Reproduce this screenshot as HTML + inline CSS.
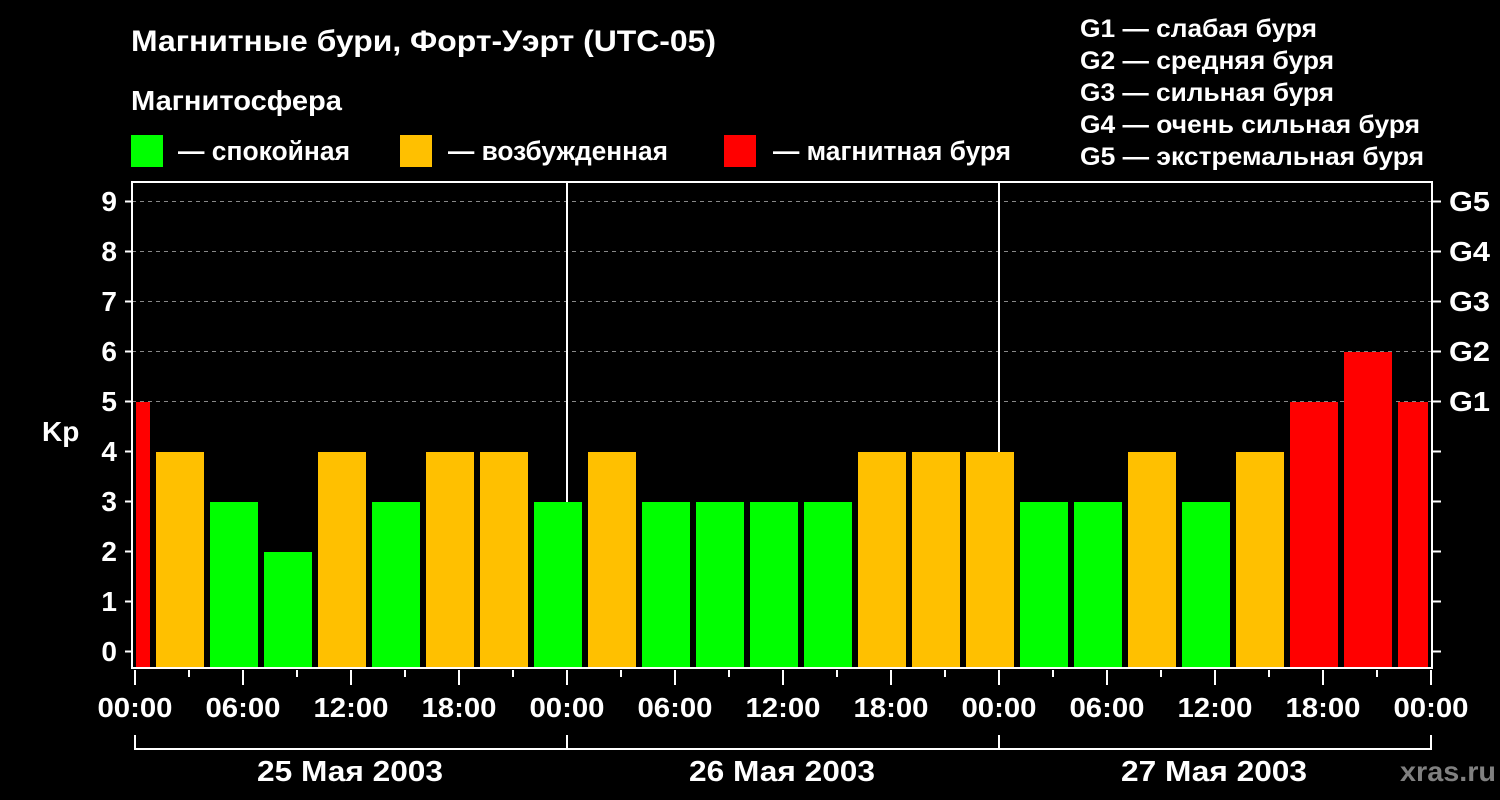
<!DOCTYPE html>
<html><head><meta charset="utf-8"><style>html,body{margin:0;padding:0;background:#000;}svg{display:block}</style></head>
<body>
<svg width="1500" height="800" viewBox="0 0 1500 800" xmlns="http://www.w3.org/2000/svg" font-family="Liberation Sans, Arial, sans-serif" font-weight="bold" fill="#fff">
<rect width="1500" height="800" fill="#000"/>
<text x="131" y="51" font-size="30" textLength="585" lengthAdjust="spacingAndGlyphs">Магнитные бури, Форт-Уэрт (UTC-05)</text>
<text x="131" y="110" font-size="28" textLength="211" lengthAdjust="spacingAndGlyphs">Магнитосфера</text>
<rect x="131" y="135" width="32" height="32" fill="#00ff00"/>
<text x="178" y="160" font-size="27" textLength="172" lengthAdjust="spacingAndGlyphs">— спокойная</text>
<rect x="400" y="135" width="32" height="32" fill="#ffc000"/>
<text x="448" y="160" font-size="27" textLength="220" lengthAdjust="spacingAndGlyphs">— возбужденная</text>
<rect x="724" y="135" width="32" height="32" fill="#ff0000"/>
<text x="773" y="160" font-size="27" textLength="238" lengthAdjust="spacingAndGlyphs">— магнитная буря</text>
<g font-size="25">
<text x="1080" y="37" textLength="237" lengthAdjust="spacingAndGlyphs">G1 — слабая буря</text>
<text x="1080" y="69" textLength="254" lengthAdjust="spacingAndGlyphs">G2 — средняя буря</text>
<text x="1080" y="101" textLength="254" lengthAdjust="spacingAndGlyphs">G3 — сильная буря</text>
<text x="1080" y="133" textLength="340" lengthAdjust="spacingAndGlyphs">G4 — очень сильная буря</text>
<text x="1080" y="165" textLength="344" lengthAdjust="spacingAndGlyphs">G5 — экстремальная буря</text>
</g>
<g stroke="#888" stroke-width="1" stroke-dasharray="4,4">
<line x1="132" y1="201.5" x2="1432" y2="201.5"/>
<line x1="132" y1="251.5" x2="1432" y2="251.5"/>
<line x1="132" y1="301.5" x2="1432" y2="301.5"/>
<line x1="132" y1="351.5" x2="1432" y2="351.5"/>
<line x1="132" y1="401.5" x2="1432" y2="401.5"/>
</g>
<g stroke="#fff" stroke-width="2">
<line x1="567" y1="181" x2="567" y2="668"/>
<line x1="999" y1="181" x2="999" y2="668"/>
</g>
<g>
<rect x="136" y="402" width="14" height="266" fill="#ff0000"/>
<rect x="156" y="452" width="48" height="216" fill="#ffc000"/>
<rect x="210" y="502" width="48" height="166" fill="#00ff00"/>
<rect x="264" y="552" width="48" height="116" fill="#00ff00"/>
<rect x="318" y="452" width="48" height="216" fill="#ffc000"/>
<rect x="372" y="502" width="48" height="166" fill="#00ff00"/>
<rect x="426" y="452" width="48" height="216" fill="#ffc000"/>
<rect x="480" y="452" width="48" height="216" fill="#ffc000"/>
<rect x="534" y="502" width="48" height="166" fill="#00ff00"/>
<rect x="588" y="452" width="48" height="216" fill="#ffc000"/>
<rect x="642" y="502" width="48" height="166" fill="#00ff00"/>
<rect x="696" y="502" width="48" height="166" fill="#00ff00"/>
<rect x="750" y="502" width="48" height="166" fill="#00ff00"/>
<rect x="804" y="502" width="48" height="166" fill="#00ff00"/>
<rect x="858" y="452" width="48" height="216" fill="#ffc000"/>
<rect x="912" y="452" width="48" height="216" fill="#ffc000"/>
<rect x="966" y="452" width="48" height="216" fill="#ffc000"/>
<rect x="1020" y="502" width="48" height="166" fill="#00ff00"/>
<rect x="1074" y="502" width="48" height="166" fill="#00ff00"/>
<rect x="1128" y="452" width="48" height="216" fill="#ffc000"/>
<rect x="1182" y="502" width="48" height="166" fill="#00ff00"/>
<rect x="1236" y="452" width="48" height="216" fill="#ffc000"/>
<rect x="1290" y="402" width="48" height="266" fill="#ff0000"/>
<rect x="1344" y="352" width="48" height="316" fill="#ff0000"/>
<rect x="1398" y="402" width="30" height="266" fill="#ff0000"/>
</g>
<g stroke="#fff" stroke-width="2" fill="none">
<rect x="132" y="182" width="1300" height="486"/>
<path d="M125 201.5H132M125 251.5H132M125 301.5H132M125 351.5H132M125 401.5H132M125 451.5H132M125 501.5H132M125 551.5H132M125 601.5H132M125 651.5H132"/>
<path d="M1432 201.5H1441M1432 251.5H1441M1432 301.5H1441M1432 351.5H1441M1432 401.5H1441M1432 451.5H1441M1432 501.5H1441M1432 551.5H1441M1432 601.5H1441M1432 651.5H1441"/>
<path d="M135 670V685M189 670V677M243 670V685M297 670V677M351 670V685M405 670V677M459 670V685M513 670V677M567 670V685M621 670V677M675 670V685M729 670V677M783 670V685M837 670V677M891 670V685M945 670V677M999 670V685M1053 670V677M1107 670V685M1161 670V677M1215 670V685M1269 670V677M1323 670V685M1377 670V677M1431 670V685"/>
<path d="M135 735V749H1431V735M567 735V749M999 735V749"/>
</g>
<g font-size="28" text-anchor="end">
<text x="117" y="211">9</text><text x="117" y="261">8</text><text x="117" y="311">7</text><text x="117" y="361">6</text><text x="117" y="411">5</text><text x="117" y="461">4</text><text x="117" y="511">3</text><text x="117" y="561">2</text><text x="117" y="611">1</text><text x="117" y="661">0</text>
</g>
<g font-size="28">
<text x="1449" y="211" textLength="41" lengthAdjust="spacingAndGlyphs">G5</text><text x="1449" y="261" textLength="41" lengthAdjust="spacingAndGlyphs">G4</text><text x="1449" y="311" textLength="41" lengthAdjust="spacingAndGlyphs">G3</text><text x="1449" y="361" textLength="41" lengthAdjust="spacingAndGlyphs">G2</text><text x="1449" y="411" textLength="41" lengthAdjust="spacingAndGlyphs">G1</text>
</g>
<text x="42" y="441" font-size="28">Kp</text>
<g font-size="28" text-anchor="middle">
<text x="135" y="717" textLength="75" lengthAdjust="spacingAndGlyphs">00:00</text><text x="243" y="717" textLength="75" lengthAdjust="spacingAndGlyphs">06:00</text><text x="351" y="717" textLength="75" lengthAdjust="spacingAndGlyphs">12:00</text><text x="459" y="717" textLength="75" lengthAdjust="spacingAndGlyphs">18:00</text>
<text x="567" y="717" textLength="75" lengthAdjust="spacingAndGlyphs">00:00</text><text x="675" y="717" textLength="75" lengthAdjust="spacingAndGlyphs">06:00</text><text x="783" y="717" textLength="75" lengthAdjust="spacingAndGlyphs">12:00</text><text x="891" y="717" textLength="75" lengthAdjust="spacingAndGlyphs">18:00</text>
<text x="999" y="717" textLength="75" lengthAdjust="spacingAndGlyphs">00:00</text><text x="1107" y="717" textLength="75" lengthAdjust="spacingAndGlyphs">06:00</text><text x="1215" y="717" textLength="75" lengthAdjust="spacingAndGlyphs">12:00</text><text x="1323" y="717" textLength="75" lengthAdjust="spacingAndGlyphs">18:00</text>
<text x="1431" y="717" textLength="75" lengthAdjust="spacingAndGlyphs">00:00</text>
</g>
<g font-size="29" text-anchor="middle">
<text x="350" y="781" textLength="186" lengthAdjust="spacingAndGlyphs">25 Мая 2003</text>
<text x="782" y="781" textLength="186" lengthAdjust="spacingAndGlyphs">26 Мая 2003</text>
<text x="1214" y="781" textLength="186" lengthAdjust="spacingAndGlyphs">27 Мая 2003</text>
</g>
<text x="1496" y="781" font-size="28" fill="#808080" text-anchor="end" textLength="96" lengthAdjust="spacingAndGlyphs">xras.ru</text>
</svg>
</body></html>
